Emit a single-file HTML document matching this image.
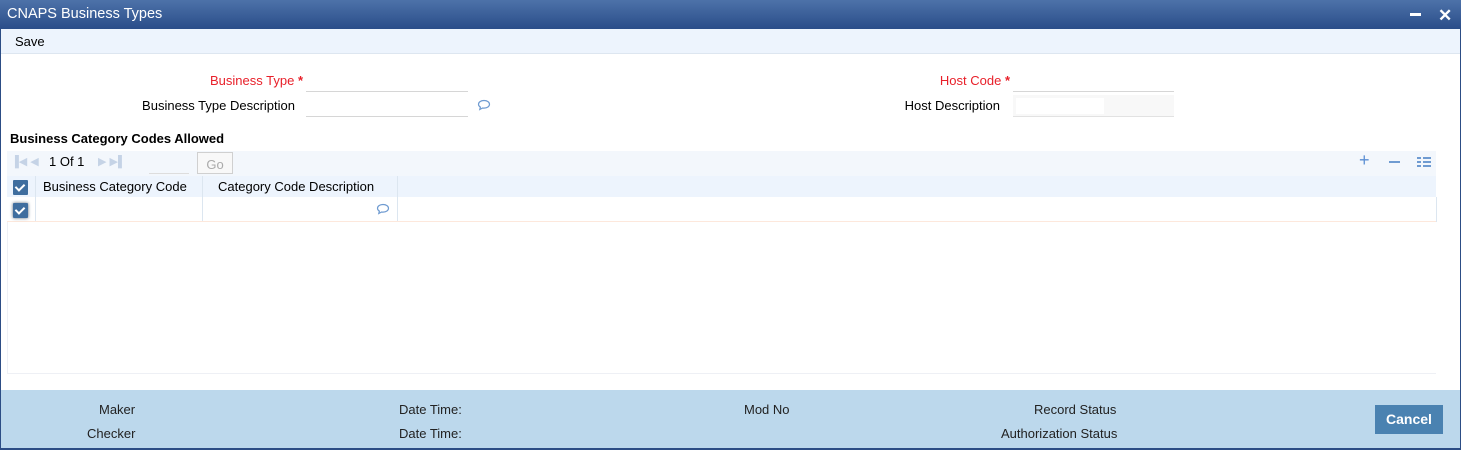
<!DOCTYPE html>
<html><head><meta charset="utf-8"><style>
*{margin:0;padding:0;box-sizing:border-box}
body{width:1464px;height:450px;background:#fff;font-family:"Liberation Sans",Arial,sans-serif;font-size:13px;color:#000;position:relative;overflow:hidden}
.a{position:absolute}
.win{left:0;top:0;width:1461px;height:450px;border-left:1px solid #2c4d85;border-right:1px solid #2c4d85;border-bottom:2px solid #2c4d85}
.title{left:0;top:0;width:1461px;height:29px;background:linear-gradient(#4d72a9,#2a4d89);color:#fff;font-size:14.5px;padding:6px 0 0 7px}
.tb{left:1px;top:29px;width:1459px;height:25px;background:#edf4fd;border-bottom:1px solid #dde6f0;padding:5px 0 0 14px;font-size:13px}
.red{color:#e8202a}
.lbl{text-align:right;font-size:13px}
.ul{border-bottom:1px solid #d6d6d6}
.foot{left:1px;top:390px;width:1459px;height:58px;background:#bcd8ec}
.foot div{position:absolute;font-size:13px;color:#222}
.cb{width:15px;height:15px;background:#3f6e9f;border-radius:1px}
.cb:after{content:"";position:absolute;left:4px;top:2px;width:4px;height:7px;border:solid #fff;border-width:0 2px 2px 0;transform:rotate(45deg)}
</style></head><body>
<div class="a win"></div>
<div class="a title">CNAPS Business Types</div>
<div class="a" style="left:1410px;top:13px;width:11px;height:3px;background:#fff"></div>
<div class="a" style="left:1438px;top:6px;color:#fff;font-size:17px;font-weight:bold">✕</div>
<div class="a tb">Save</div>

<div class="a lbl red" style="left:140px;top:73px;width:163px">Business Type <b>*</b></div>
<div class="a ul" style="left:306px;top:76px;width:162px;height:16px"></div>
<div class="a lbl" style="left:90px;top:98px;width:205px">Business Type Description</div>
<div class="a ul" style="left:306px;top:101px;width:162px;height:16px"></div>
<svg class="a" style="left:477px;top:99px" width="14" height="12" viewBox="0 0 14 12"><path d="M7 1.5C3.8 1.5 1.5 3.2 1.5 5.3c0 1.2.7 2.2 1.9 2.9L2.8 10.5l2.8-1.5c.5.1.9.1 1.4.1 3.2 0 5.5-1.7 5.5-3.8S10.2 1.5 7 1.5z" fill="none" stroke="#6f9bd1" stroke-width="1.2"/></svg>

<div class="a lbl red" style="left:850px;top:73px;width:160px">Host Code <b>*</b></div>
<div class="a ul" style="left:1013px;top:76px;width:161px;height:16px"></div>
<div class="a lbl" style="left:850px;top:98px;width:150px">Host Description</div>
<div class="a" style="left:1013px;top:95px;width:161px;height:22px;background:#f8f8f8;border-bottom:1px solid #e2e2e2"></div>
<div class="a" style="left:1016px;top:98px;width:88px;height:16px;background:#fff"></div>

<div class="a" style="left:10px;top:131px;font-weight:bold;font-size:13px">Business Category Codes Allowed</div>
<div class="a" style="left:7px;top:151px;width:1429px;height:25px;background:#f3f7fc"></div>
<div class="a" style="left:11px;top:155px;color:#c5d3e6;font-size:11px">▐◀ ◀</div>
<div class="a" style="left:49px;top:154px;font-size:13px">1&nbsp;Of&nbsp;1</div>
<div class="a" style="left:98px;top:155px;color:#c5d3e6;font-size:11px">▶ ▶▌</div>
<div class="a" style="left:149px;top:173px;width:40px;border-bottom:1px solid #ddd"></div>
<div class="a" style="left:197px;top:152px;width:36px;height:22px;border:1px solid #d0d0d0;color:#aaa;text-align:center;padding-top:4px;background:#f8f8f8">Go</div>
<div class="a" style="left:1359px;top:150px;color:#5b8fd3;font-size:18px">+</div>
<div class="a" style="left:1389px;top:161px;width:11px;height:2px;background:#6f9bd1"></div>
<div class="a" style="left:1417px;top:157px;width:4px;height:2px;background:#6f9bd1;box-shadow:0 4px #6f9bd1,0 8px #6f9bd1"></div>
<div class="a" style="left:1423px;top:157px;width:8px;height:2px;background:#6f9bd1;box-shadow:0 4px #6f9bd1,0 8px #6f9bd1"></div>

<div class="a" style="left:7px;top:176px;width:1429px;height:21px;background:#edf4fd"></div>
<div class="a" style="left:35px;top:176px;width:1px;height:46px;background:#dce6f0"></div>
<div class="a" style="left:202px;top:176px;width:1px;height:46px;background:#dce6f0"></div>
<div class="a" style="left:397px;top:176px;width:1px;height:46px;background:#dce6f0"></div>
<div class="a" style="left:1436px;top:197px;width:1px;height:25px;background:#dce6f0"></div>
<div class="a" style="left:7px;top:221px;width:1429px;height:1px;background:#fde8dc"></div>
<div class="a cb" style="left:13px;top:180px"></div>
<div class="a" style="left:43px;top:179px">Business Category Code</div>
<div class="a" style="left:218px;top:179px">Category Code Description</div>
<div class="a cb" style="left:13px;top:203px;box-shadow:0 0 3px #567"></div>
<svg class="a" style="left:376px;top:203px" width="14" height="12" viewBox="0 0 14 12"><path d="M7 1.5C3.8 1.5 1.5 3.2 1.5 5.3c0 1.2.7 2.2 1.9 2.9L2.8 10.5l2.8-1.5c.5.1.9.1 1.4.1 3.2 0 5.5-1.7 5.5-3.8S10.2 1.5 7 1.5z" fill="none" stroke="#6f9bd1" stroke-width="1.2"/></svg>
<div class="a" style="left:7px;top:222px;width:1px;height:152px;background:#eef0f5"></div>
<div class="a" style="left:7px;top:373px;width:1429px;height:1px;background:#eef0f5"></div>

<div class="a foot">
<div style="left:98px;top:12px">Maker</div>
<div style="left:86px;top:36px">Checker</div>
<div style="left:398px;top:12px">Date Time:</div>
<div style="left:398px;top:36px">Date Time:</div>
<div style="left:743px;top:12px">Mod No</div>
<div style="left:1033px;top:12px">Record Status</div>
<div style="left:1000px;top:36px">Authorization Status</div>
<div style="left:1374px;top:15px;width:68px;height:29px;background:#4a82b1;color:#fff;font-weight:bold;font-size:14px;text-align:center;padding-top:6px">Cancel</div>
</div>
</body></html>
